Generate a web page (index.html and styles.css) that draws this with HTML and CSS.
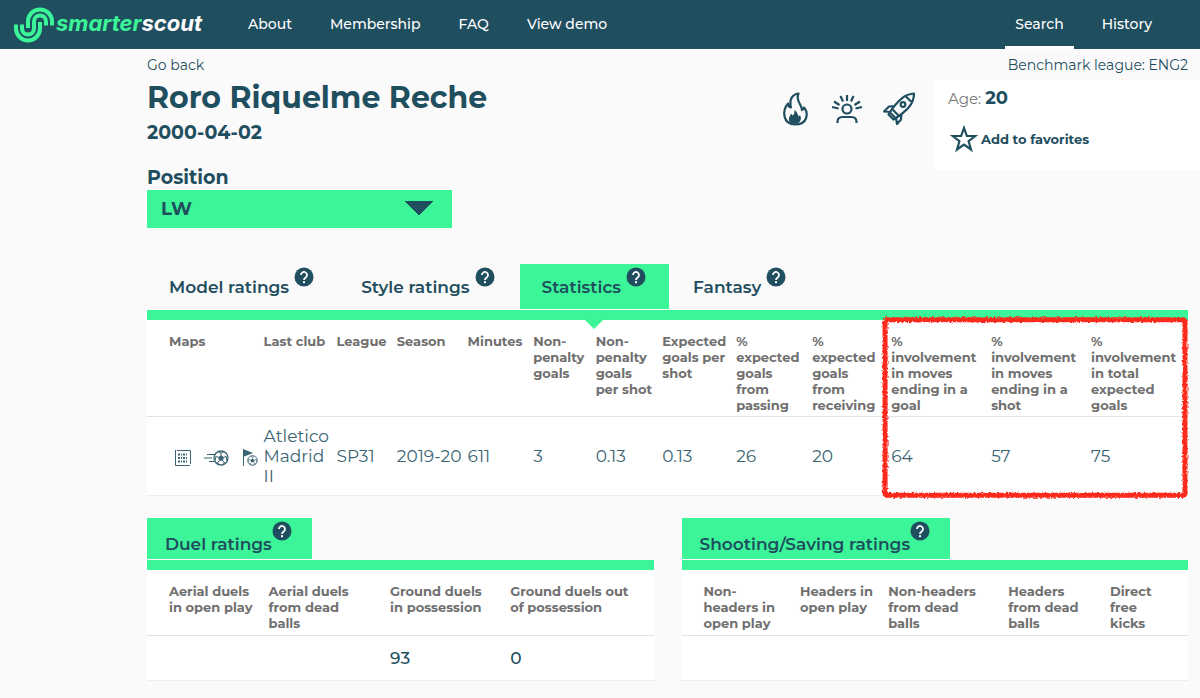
FILE: index.html
```
<!DOCTYPE html>
<html lang="en">
<head>
<meta charset="utf-8">
<meta name="viewport" content="width=device-width, initial-scale=1">
<title>smarterscout – Roro Riquelme Reche</title>
<link rel="stylesheet" href="styles.css">
</head>
<body>
<svg class="defs" aria-hidden="true">
  <symbol id="help" viewBox="0 0 20 20">
    <circle cx="10" cy="10" r="9.5" fill="#1f4e5f"/>
    <path d="M7 8a3 3 0 1 1 5 2.200c-1.200 1-2 1.500-2 2.800" fill="none" stroke="#fff" stroke-width="1.800"/>
    <rect x="9" y="14.200" width="2" height="2" fill="#fff"/>
  </symbol>
  <symbol id="ball" viewBox="0 0 16 16">
    <circle cx="8" cy="8" r="7" fill="none" stroke="currentColor" stroke-width="1.300"/>
    <path d="M8 5l3 2.200-1.100 3.500H6.100L5 7.200z" fill="currentColor"/>
    <path d="M8 5V3M11 7.200l2-.7M9.900 10.700l1.400 1.900M6.100 10.700l-1.400 1.900M5 7.200l-2-.7M5.300 1.800L8 3.200l2.700-1.400M14.700 6l-1.500 1 .7 3.600M12.600 13.200l-1.600-.6-1.500 2.100M3.400 13.200l1.600-.6 1.500 2.100M1.300 6l1.500 1-.7 3.600" fill="none" stroke="currentColor"/>
  </symbol>
</svg>

<header class="topbar">
  <a class="brand" href="#">
    <svg class="brand-mark" viewBox="0 0 40 36" fill="none" stroke="#3bf598" stroke-width="4">
      <path d="M2 17.500v4a12 12 0 0 0 24 0V15"/>
      <path d="M14 21v-6.500a12 12 0 0 1 24 0v4"/>
      <path d="M8 17.500v4a6 6 0 0 0 12 0v-7a6 6 0 0 1 12 0v4"/>
    </svg>
    <span class="brand-name"><span class="brand-accent">smarter</span>scout</span>
  </a>
  <nav class="nav">
    <a href="#">About</a><a href="#">Membership</a><a href="#">FAQ</a><a href="#">View demo</a>
  </nav>
  <nav class="nav nav-right">
    <a class="current" href="#">Search</a><a href="#">History</a>
  </nav>
</header>

<main class="page">
  <div class="subbar"><a href="#">Go back</a><span>Benchmark league: ENG2</span></div>

  <section class="profile">
    <div class="identity">
      <h1>Roro Riquelme Reche</h1>
      <p class="birth">2000-04-02</p>
      <div class="position">
        <label for="position">Position</label>
        <select id="position"><option>LW</option></select>
      </div>
    </div>
    <div class="traits">
      <svg viewBox="0 0 32 34" fill="none" stroke="#1f4e5f" stroke-width="2.200">
        <path d="M19.500 1.500c-6.500 1-9.500 6-7.500 14-2-.5-3-2-3-4-6 7-5.500 20.500 7 21 12.500 0 14-11 9-17-.5 1.500-1 2-2 2.500 0-6-7-9-3.500-16.500z" stroke-linejoin="round"/>
        <path d="M10.500 30c-1.500-4 .5-6 1.500-8.500l1.500 2c2-1 2-3.500 2-5.500 3.500 2.500 3 5 4.500 6.500l1-1.500c1.500 3 1 5-.5 7-2 2.500-8 2.500-10 0z" fill="#1f4e5f" stroke="none"/>
      </svg>
      <svg viewBox="0 0 32 34" fill="none" stroke="#1f4e5f" stroke-width="2.200">
        <circle cx="16" cy="17" r="4.500"/>
        <path d="M6.500 31v-1c0-4 2-5 5-5h9c3 0 5 1 5 5v1M16 9V3M12 9.500L9.500 4M20 9.500L22.500 4M8.500 13L3 9.500M23.500 13L29 9.500M7.500 16.500L1 15M24.500 16.500l6.500-1.500"/>
      </svg>
      <svg viewBox="0 0 32 34" fill="none" stroke="#1f4e5f" stroke-width="2.200" stroke-linejoin="round">
        <path d="M31 1.500c-8 .5-13 4-22 15.500l7 7C27 16 31 10 31 1.500zM23 4.500l5 5M11.500 14l-5.500.5-5 5 6.500.5M18.500 21.500l-.5 6-4 4.500-1-6.500M9 17l-3.500 5.500 5 5L16 24M6 19.500l7 7"/>
        <circle cx="20" cy="12.500" r="2.300"/>
      </svg>
    </div>
    <aside class="summary">
      <p class="age">Age: <strong>20</strong></p>
      <button class="favorite" type="button">
        <svg viewBox="0 0 28 28"><path d="M14 3l2.900 8h8.400l-6.700 5.200 2.400 8.300-7-4.900-7 4.900 2.400-8.300L2.700 11h8.400z" fill="none" stroke="#1f4e5f" stroke-width="2.200"/></svg>
        Add to favorites
      </button>
    </aside>
  </section>

  <div class="tabs" role="tablist">
    <button role="tab" type="button">Model ratings<svg class="help"><use href="#help"/></svg></button>
    <button role="tab" type="button">Style ratings<svg class="help"><use href="#help"/></svg></button>
    <button role="tab" type="button" class="active" aria-selected="true">Statistics<svg class="help"><use href="#help"/></svg></button>
    <button role="tab" type="button">Fantasy<svg class="help"><use href="#help"/></svg></button>
  </div>

  <div class="panel">
    <table class="stats">
      <colgroup><col class="c-maps"><col class="c-club"><col class="c-league"><col class="c-season"><col class="c-minutes"><col class="c-npg"><col class="c-nps"><col class="c-xg"><col class="c-pass"><col class="c-recv"><col class="c-inv"><col class="c-inv"><col></colgroup>
      <thead><tr>
        <th>Maps</th><th>Last club</th><th>League</th><th>Season</th><th>Minutes</th>
        <th>Non-<br>penalty<br>goals</th><th>Non-<br>penalty<br>goals<br>per shot</th><th>Expected<br>goals per<br>shot</th>
        <th>%<br>expected<br>goals<br>from<br>passing</th><th>%<br>expected<br>goals<br>from<br>receiving</th>
        <th>%<br>involvement<br>in moves<br>ending in a<br>goal</th><th>%<br>involvement<br>in moves<br>ending in a<br>shot</th><th>%<br>involvement<br>in total<br>expected<br>goals</th>
      </tr></thead>
      <tbody><tr>
        <td><div class="maps">
          <a href="#" aria-label="Heat map"><svg width="18" height="18" viewBox="0 0 18 18" fill="none" stroke="currentColor"><path d="M1.500 1v15.500H16M3 1.500h13.500V15"/><path d="M4 5.500h10M4 9h10M4 12.500h10" stroke-width="2" stroke-dasharray="2 1 1 1"/></svg></a>
          <a href="#" aria-label="Shot map"><svg width="26" height="18" viewBox="0 0 26 18"><path d="M3 5.500h9M0 9h8M5 12.500h5" stroke="currentColor" fill="none"/><use href="#ball" x="9" y="1" width="16" height="16"/></svg></a>
          <a href="#" aria-label="Set piece map"><svg width="16" height="18" viewBox="0 0 16 18"><path d="M1.500 17V1" stroke="currentColor"/><path d="M1 0l10 4-10 4z" fill="currentColor"/><use href="#ball" x="5" y="6" width="11" height="11"/></svg></a>
        </div></td>
        <td>Atletico<br>Madrid<br>II</td><td>SP31</td><td>2019-20</td><td>611</td><td>3</td><td>0.13</td><td>0.13</td><td>26</td><td>20</td><td>64</td><td>57</td><td>75</td>
      </tr></tbody>
    </table>
    <svg class="marker" aria-hidden="true">
      <filter id="chalk" x="-5%" y="-5%" width="110%" height="110%"><feTurbulence type="fractalNoise" baseFrequency="0.5" numOctaves="2" seed="4"/><feDisplacementMap in="SourceGraphic" scale="4"/></filter>
      <rect x="1%" y="2%" width="98%" height="96%" rx="2" fill="none" stroke="#fb2a1c" stroke-width="5" filter="url(#chalk)"/>
    </svg>
  </div>

  <div class="ratings">
    <section>
      <h2>Duel ratings<svg class="help"><use href="#help"/></svg></h2>
      <table class="small">
        <colgroup><col class="d-1"><col class="d-2"><col class="d-3"><col></colgroup>
        <thead><tr><th>Aerial duels<br>in open play</th><th>Aerial duels<br>from dead<br>balls</th><th>Ground duels<br>in possession</th><th>Ground duels out<br>of possession</th></tr></thead>
        <tbody><tr><td></td><td></td><td>93</td><td>0</td></tr></tbody>
      </table>
    </section>
    <section>
      <h2>Shooting/Saving ratings<svg class="help"><use href="#help"/></svg></h2>
      <table class="small">
        <colgroup><col class="s-1"><col class="s-2"><col class="s-3"><col class="s-4"><col></colgroup>
        <thead><tr><th>Non-<br>headers in<br>open play</th><th>Headers in<br>open play</th><th>Non-headers<br>from dead<br>balls</th><th>Headers<br>from dead<br>balls</th><th>Direct<br>free<br>kicks</th></tr></thead>
        <tbody><tr><td></td><td></td><td></td><td></td><td></td></tr></tbody>
      </table>
    </section>
  </div>
</main>
</body>
</html>
```

FILE: styles.css
```
* { box-sizing: border-box; }
body { margin: 0; background: #fafafa; color: #1f4e5f; font-family: Montserrat, Inter, "Open Sans", sans-serif; font-size: 14px; }
a { color: inherit; text-decoration: none; }
h1, h2, p { margin: 0; }
button, select { font: inherit; color: inherit; border: 0; background: none; }
.defs { position: absolute; width: 0; height: 0; }

/* Top bar */
.topbar { display: flex; align-items: stretch; min-height: 49px; padding: 0 38px 0 14px; background: #1f4e5f; color: #fff; }
.brand { display: flex; align-items: center; gap: 2px; width: 224px; }
.brand-mark { width: 40px; height: 36px; flex: none; }
.brand-name { font-family: Inter, "Open Sans", sans-serif; font-size: 22px; font-weight: 700; font-style: italic; line-height: 24px; padding-bottom: 4px; }
.brand-accent { color: #3bf598; }
.nav { display: flex; font-size: 14px; font-weight: 500; gap: 18px; }
.nav a { display: flex; align-items: center; padding: 2px 10px 0; border-bottom: 3px solid transparent; }
.nav .current { border-color: #fff; }
.nav-right { margin-left: auto; }

/* Player header */
.page { padding: 0 12px 16px 147px; }
.subbar { display: flex; justify-content: space-between; padding-top: 6px; line-height: 20px; }
.profile { display: flex; align-items: flex-start; margin-right: -12px; padding-top: 5px; }
.identity { flex: 1; }
h1 { font-size: 30px; line-height: 36px; font-weight: 700; }
.birth { padding-top: 5px; font-size: 19px; line-height: 24px; font-weight: 700; }
.traits { display: flex; gap: 20px; padding: 12px 19px 0 0; }
.traits svg { width: 32px; height: 34px; }
.summary { width: 266px; height: 90px; padding: 6px 14px; background: #fff; }
.age { color: #777; font-size: 15px; line-height: 24px; }
.age strong { color: #1f4e5f; font-size: 18px; }
.favorite { display: flex; align-items: center; gap: 3px; padding: 0 2px; margin-top: 14px; font-size: 13px; font-weight: 700; }
.favorite svg { width: 28px; height: 28px; }

.position { width: 305px; padding-top: 20px; }
.position label { display: block; font-size: 19px; line-height: 25px; font-weight: 700; }
.position select { display: block; appearance: none; width: 100%; height: 38px; padding: 0 14px; font-size: 18px; font-weight: 700; background: #3bf598 conic-gradient(from -45deg at 50% 100%, #1f4e5f 90deg, transparent 0) right 19px top 11px / 28px 14px no-repeat; }

/* Tabs */
.tabs { display: flex; gap: 2px; padding-top: 36px; margin-bottom: 1px; }
.tabs button { display: flex; gap: 5px; height: 45px; padding: 3px 23px 0 22px; font-size: 17px; line-height: 40px; font-weight: 600; }
.help { width: 20px; height: 20px; flex: none; }
.tabs .active { position: relative; z-index: 1; background: #3bf598; }
.active::after { content: ""; position: absolute; top: calc(100% + 10px); left: 50%; margin-left: -10px; border: 10px solid transparent; border-top-color: #3bf598; border-bottom: 0; }

/* Tables */
table { width: 100%; table-layout: fixed; border-collapse: separate; border-spacing: 0; border-top: 10px solid #3bf598; background: #fff; }
th, td { text-align: left; padding: 0; white-space: nowrap; border-bottom: 1px solid #e2e2e2; }
th { vertical-align: top; padding-top: 13px; padding-bottom: 3px; color: #707070; font-size: 13px; line-height: 16px; font-weight: 700; }
td { font-size: 17px; line-height: 20px; border-bottom-color: #eee; }
th:first-child { padding-left: 22px; }
.panel { position: relative; }
.stats td { padding: 9px 0; color: #3a6473; }
.maps { display: flex; align-items: center; padding: 3px 0 0 27px; gap: 12px; }
.maps svg { display: block; }
.c-maps { width: 11.2%; }
.c-club { width: 7%; }
.c-league { width: 5.8%; }
.c-season { width: 6.8%; }
.c-minutes { width: 6.3%; }
.c-npg { width: 6%; }
.c-nps { width: 6.4%; }
.c-xg { width: 7.1%; }
.c-pass { width: 7.3%; }
.c-recv { width: 7.6%; }
.c-inv { width: 9.6%; }
.marker { position: absolute; top: 6px; right: 0; width: 29.4%; height: calc(100% - 3px); overflow: visible; pointer-events: none; }

/* Lower ratings */
.ratings { display: grid; grid-template-columns: 1fr 1fr; gap: 28px; padding-top: 22px; }
h2 { display: flex; width: fit-content; height: 41px; margin-bottom: 1px; padding: 3px 20px 0 18px; background: #3bf598; font-size: 17px; line-height: 46px; font-weight: 600; }
.small th { padding-bottom: 4px; }
.small td { height: 45px; font-weight: 500; }
.d-1 { width: 24%; }
.d-2 { width: 24%; }
.d-3 { width: 23.7%; }
.s-1 { width: 23.4%; }
.s-2 { width: 17.4%; }
.s-3 { width: 23.7%; }
.s-4 { width: 20.1%; }
```
